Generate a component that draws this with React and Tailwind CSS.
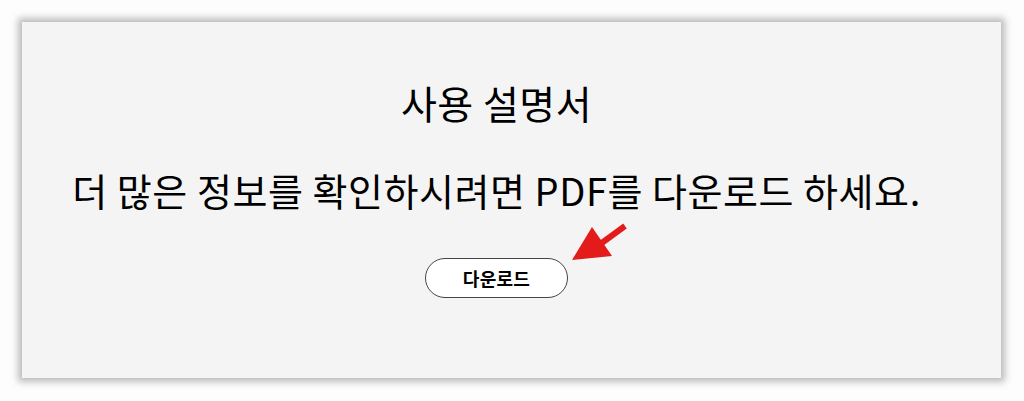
export default function App() {
  return (
    <div className="h-[401px] w-[1024px] bg-[#fdfdfd] p-[22px] pr-[23px] pb-[23px] font-['Noto_Sans_CJK_KR','Noto_Sans',sans-serif]">
      <div className="flex h-[356px] flex-col items-center bg-[#f4f4f4] pr-[30px] shadow-[0_0_7px_4px_rgba(0,0,0,0.26)]">
        <h1 className="mt-[57px] text-[39px] leading-[46px] font-normal tracking-[0.5px] text-black">사용 설명서</h1>
        <p className="mt-[42px] text-[38px] leading-[46px] tracking-[0.55px] whitespace-nowrap text-black">
          더 많은 정보를 확인하시려면 PDF를 다운로드 하세요.
        </p>
        <div className="relative mt-[45px]">
          <button
            type="button"
            className="h-[40px] w-[143px] rounded-full border border-[#444] bg-white text-[18px] font-bold tracking-[0.3px] text-black"
          >
            다운로드
          </button>
          <svg
            className="absolute top-[-36px] left-[144px]"
            width="64"
            height="44"
            viewBox="0 0 64 44"
          >
            <polygon points="3,38 23,5 43,34" fill="#e41b1b" />
            <line x1="30" y1="23" x2="56" y2="4" stroke="#e41b1b" strokeWidth="6" />
          </svg>
        </div>
      </div>
    </div>
  );
}
